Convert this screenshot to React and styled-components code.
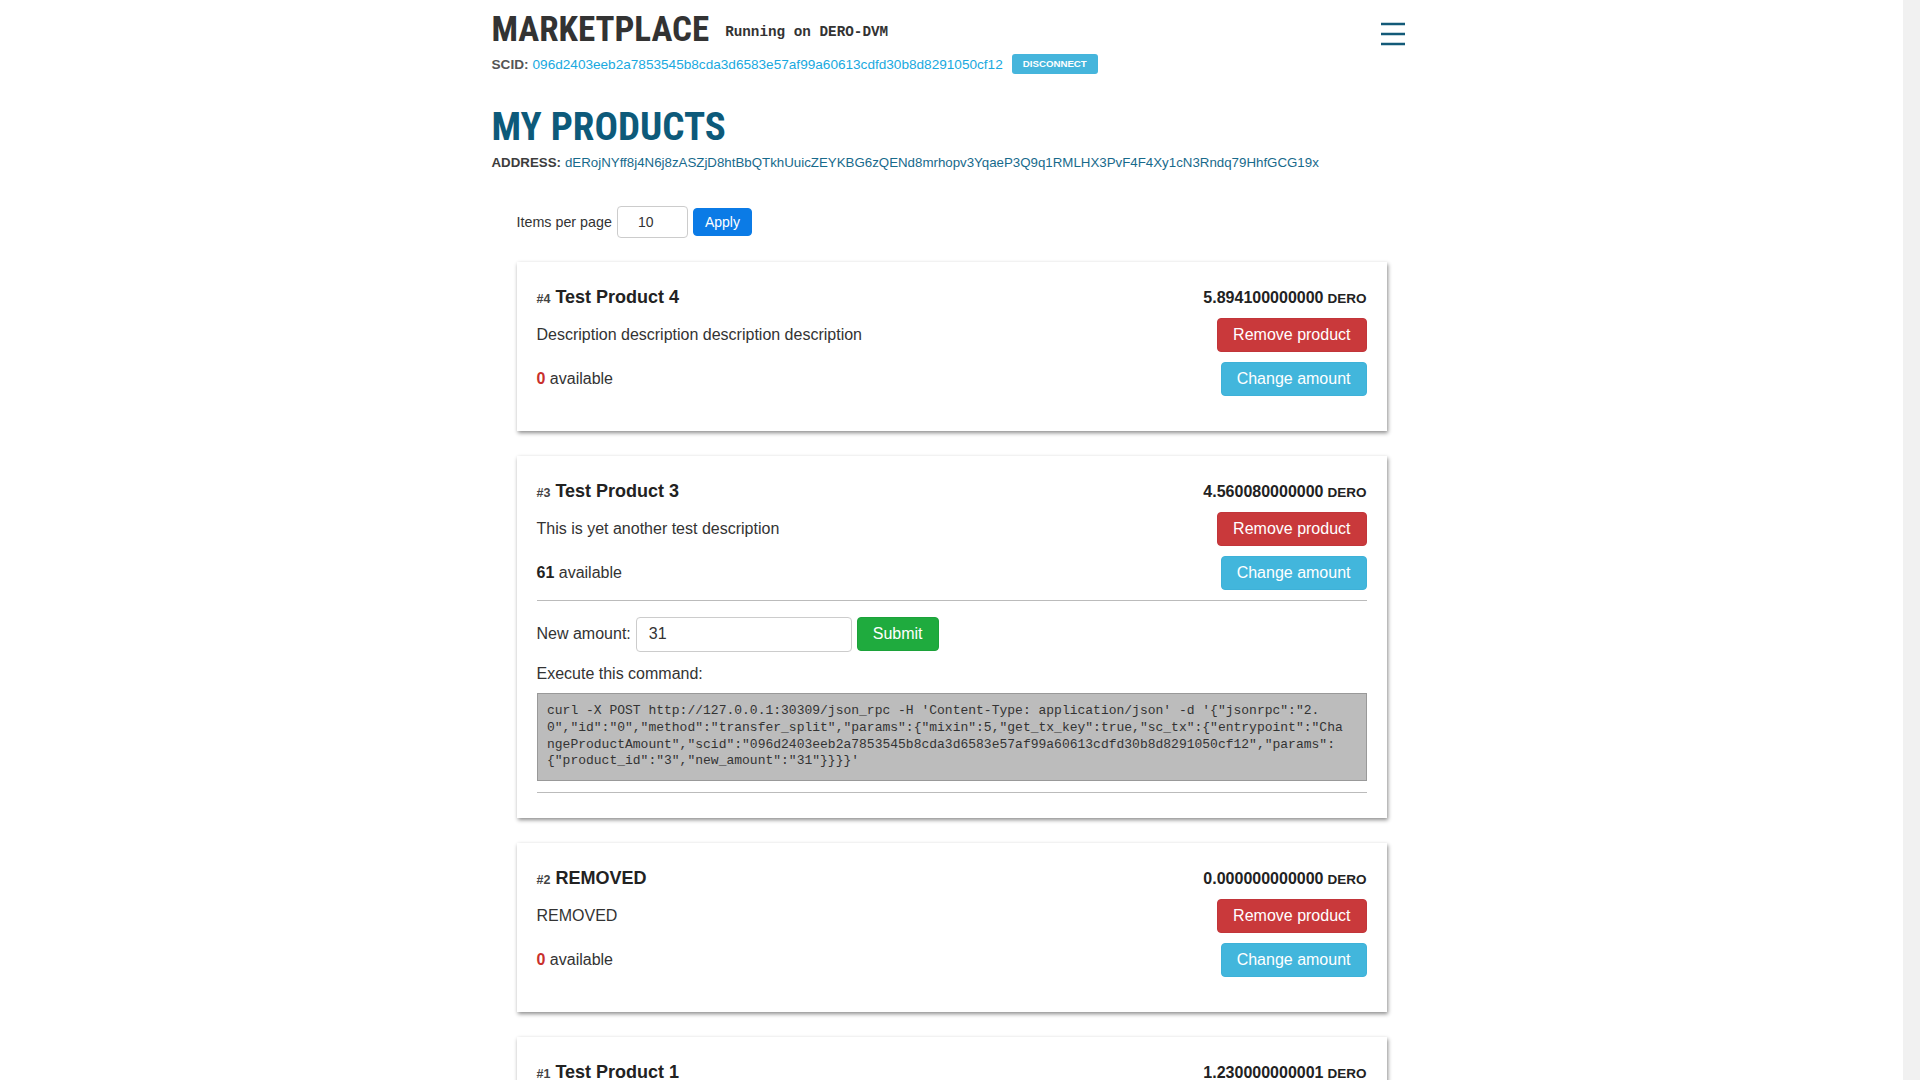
import React from "react";
import styled, { createGlobalStyle } from "styled-components";

const SCID = "096d2403eeb2a7853545b8cda3d6583e57af99a60613cdfd30b8d8291050cf12";
const ADDRESS =
  "dERojNYff8j4N6j8zASZjD8htBbQTkhUuicZEYKBG6zQENd8mrhopv3YqaeP3Q9q1RMLHX3PvF4F4Xy1cN3Rndq79HhfGCG19x";

const products = [
  { id: 4, name: "Test Product 4", price: "5.894100000000", description: "Description description description description", available: 0 },
  { id: 3, name: "Test Product 3", price: "4.560080000000", description: "This is yet another test description", available: 61, open: true, newAmount: "31" },
  { id: 2, name: "REMOVED", price: "0.000000000000", description: "REMOVED", available: 0 },
  { id: 1, name: "Test Product 1", price: "1.230000000001", description: "Another description", available: 12 },
];

const condensed = `"Liberation Sans Narrow", "Arial Narrow", "Roboto Condensed", Roboto, "Liberation Sans", sans-serif`;

// the page is laid out beside a 17px scrollbar gutter, as in a desktop browser
const GlobalStyle = createGlobalStyle`
  html {
    border-right: 17px solid #f1f1f1;
    background: #fff;
  }
  body {
    margin: 0;
    font-family: "Liberation Sans", Arial, Helvetica, sans-serif;
    font-size: 16px;
    color: #333;
  }
  * { box-sizing: border-box; }
`;

const Page = styled.div`
  max-width: 920px;
  margin: 0 auto;
  padding: 10px 0 105px;
`;

// ---- header ----
const Header = styled.header`
  display: flex;
  justify-content: space-between;
  align-items: flex-start;
`;

const Brand = styled.div`
  display: flex;
  flex-direction: column;
`;

const TitleLine = styled.div`
  display: flex;
  align-items: center;
  gap: 16px;
`;

const SiteTitle = styled.h1`
  margin: 0;
  font-family: ${condensed};
  font-stretch: condensed;
  font-size: 35px;
  line-height: 40px;
  font-weight: 700;
  color: #333;
`;

const Tagline = styled.span`
  font-family: "Liberation Mono", "DejaVu Sans Mono", monospace;
  font-weight: 700;
  font-size: 14.3px;
  color: #333;
  margin-top: 4px;
`;

const ScidLine = styled.div`
  display: flex;
  align-items: center;
  margin-top: 4px;
  font-size: 13.6px;
  height: 20px;
`;

const Label = styled.span`
  font-weight: 700;
  color: ${(p) => p.$color || "#555"};
  margin-right: 4px;
`;

const ScidLink = styled.a`
  color: #19a9e0;
  text-decoration: none;
`;

const DisconnectButton = styled.button`
  margin-left: 9px;
  height: 20px;
  padding: 0 11px;
  border: none;
  border-radius: 3px;
  background: #45b5dc;
  color: #fff;
  font-family: "Liberation Sans", Arial, sans-serif;
  font-weight: 700;
  font-size: 9.7px;
  line-height: 20px;
  cursor: pointer;
`;

const MenuButton = styled.button`
  margin: 12px 7px 0 0;
  padding: 0;
  border: none;
  background: none;
  color: #135a78;
  line-height: 0;
  cursor: pointer;
`;

const PageTitle = styled.h2`
  margin: 33px 0 0;
  font-family: ${condensed};
  font-stretch: condensed;
  font-size: 39px;
  line-height: 40px;
  font-weight: 700;
  color: #0d5a7a;
`;

const AddressLine = styled.div`
  margin-top: 6.5px;
  font-size: 13.3px;
  line-height: 18px;
  white-space: nowrap;
`;

const AddressValue = styled.a`
  color: #176a8c;
  text-decoration: none;
`;

// ---- products ----
const ProductSection = styled.section`
  padding: 0 25px;
  margin-top: 34px;
`;

const PagerForm = styled.form`
  display: flex;
  align-items: center;
  gap: 5px;
  font-size: 14.3px;
  margin-bottom: 24px;
`;

const PagerInput = styled.input`
  width: 71px;
  height: 32px;
  padding: 0 0 0 20px;
  border: 1px solid #ccc;
  border-radius: 4px;
  font-family: inherit;
  font-size: 14px;
  color: #333;
`;

const Button = styled.button`
  border: 1px solid ${(p) => p.$border};
  background: ${(p) => p.$bg};
  color: #fff;
  border-radius: 4px;
  font-family: "Liberation Sans", Arial, sans-serif;
  font-size: ${(p) => p.$size || "16px"};
  line-height: 20px;
  padding: ${(p) => p.$pad || "6px 15px"};
  cursor: pointer;
  white-space: nowrap;
`;

const Card = styled.article`
  background: #fff;
  box-shadow: 1px 2px 4px rgba(0, 0, 0, 0.45);
  padding: 22px 20px 25px;
  margin-bottom: 25px;
`;

const HeadRow = styled.div`
  display: flex;
  justify-content: space-between;
  align-items: baseline;
  height: 26px;
  line-height: 26px;
  font-weight: 700;
`;

const ProductNo = styled.span`
  font-size: 12.5px;
  color: #444;
  margin-right: 5px;
`;

const ProductName = styled.span`
  font-size: 18px;
  color: #222;
`;

const Price = styled.span`
  font-size: 16px;
  color: #222;
`;

const Unit = styled.span`
  font-size: 13.5px;
  margin-left: 4px;
`;

const InfoRow = styled.div`
  display: flex;
  justify-content: space-between;
  align-items: center;
  margin: ${(p) => (p.$last ? "10px 0 10px" : "8px 0 0")};
`;

const Amount = styled.strong`
  color: ${(p) => (p.$empty ? "#c9302c" : "#222")};
`;

const Divider = styled.hr`
  margin: ${(p) => p.$margin || "0"};
  border: none;
  border-top: 1px solid #bbb;
`;

const AmountForm = styled.form`
  display: flex;
  align-items: center;
  gap: 5px;
  margin-top: 16px;
`;

const AmountInput = styled.input`
  width: 216px;
  height: 35px;
  padding: 6px 12px;
  border: 1px solid #ccc;
  border-radius: 4px;
  font-family: inherit;
  font-size: 16px;
  color: #333;
`;

const Hint = styled.p`
  margin: 10px 0 8px;
  line-height: 23px;
`;

const Command = styled.pre`
  margin: 0;
  padding: 9.5px 16px 9.5px 9.5px;
  background: #bcbcbc;
  border: 1px solid #999;
  font-family: "Liberation Mono", "DejaVu Sans Mono", monospace;
  font-size: 13px;
  line-height: 16.8px;
  color: #333;
  white-space: pre-wrap;
  word-break: break-all;
`;

function commandFor(product) {
  return (
    `curl -X POST http://127.0.0.1:30309/json_rpc -H 'Content-Type: application/json' -d ` +
    `'{"jsonrpc":"2.0","id":"0","method":"transfer_split","params":{"mixin":5,"get_tx_key":true,` +
    `"sc_tx":{"entrypoint":"ChangeProductAmount","scid":"${SCID}","params":{"product_id":"${product.id}","new_amount":"${product.newAmount}"}}}}'`
  );
}

function ProductCard({ product }) {
  return (
    <Card>
      <HeadRow>
        <span>
          <ProductNo>#{product.id}</ProductNo>
          <ProductName>{product.name}</ProductName>
        </span>
        <Price>
          {product.price}
          <Unit>DERO</Unit>
        </Price>
      </HeadRow>
      <InfoRow>
        <span>{product.description}</span>
        <Button $bg="#c9393b" $border="#c2353a">Remove product</Button>
      </InfoRow>
      <InfoRow $last>
        <span>
          <Amount $empty={product.available === 0}>{product.available}</Amount> available
        </span>
        <Button $bg="#42b6dc" $border="#3eb1d8">Change amount</Button>
      </InfoRow>
      {product.open && (
        <>
          <Divider />
          <AmountForm onSubmit={(e) => e.preventDefault()}>
            <span>New amount:</span>
            <AmountInput defaultValue={product.newAmount} />
            <Button $bg="#1fab3e" $border="#1ca23a">Submit</Button>
          </AmountForm>
          <Hint>Execute this command:</Hint>
          <Command>{commandFor(product)}</Command>
          <Divider $margin="11px 0 0" />
        </>
      )}
    </Card>
  );
}

function App() {
  return (
    <>
      <GlobalStyle />
      <Page>
        <Header>
          <Brand>
            <TitleLine>
              <SiteTitle>MARKETPLACE</SiteTitle>
              <Tagline>Running on DERO-DVM</Tagline>
            </TitleLine>
            <ScidLine>
              <Label>SCID:</Label>
              <ScidLink href="#">{SCID}</ScidLink>
              <DisconnectButton>DISCONNECT</DisconnectButton>
            </ScidLine>
          </Brand>
          <MenuButton aria-label="menu">
            <svg width="24" height="24" viewBox="0 0 24 24">
              <path d="M0 2h24M0 12h24M0 22h24" stroke="currentColor" strokeWidth="2.6" />
            </svg>
          </MenuButton>
        </Header>

        <PageTitle>MY PRODUCTS</PageTitle>
        <AddressLine>
          <Label $color="#3d3d3d">ADDRESS:</Label>
          <AddressValue href="#">{ADDRESS}</AddressValue>
        </AddressLine>

        <ProductSection>
          <PagerForm onSubmit={(e) => e.preventDefault()}>
            <span>Items per page</span>
            <PagerInput defaultValue="10" />
            <Button $bg="#0b7be6" $border="#0b7be6" $size="14px" $pad="3px 11px">
              Apply
            </Button>
          </PagerForm>
          {products.map((p) => (
            <ProductCard key={p.id} product={p} />
          ))}
        </ProductSection>
      </Page>
    </>
  );
}

export default App;
